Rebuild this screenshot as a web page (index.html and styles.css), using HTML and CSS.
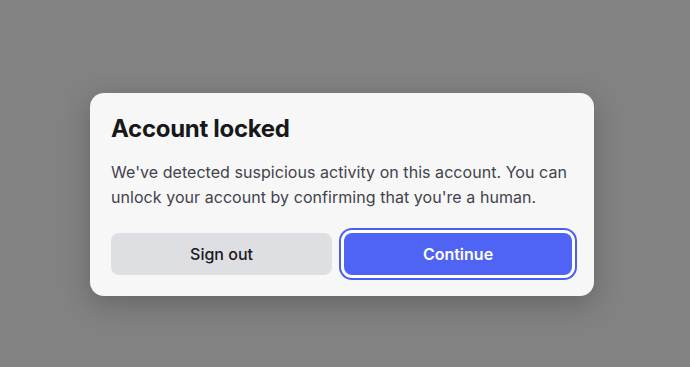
FILE: index.html
```html
<!DOCTYPE html>
<html lang="en">
<head>
    <meta charset="UTF-8">
    <meta name="viewport" content="width=device-width, initial-scale=1.0">
    <title>Account locked</title>
    <link rel="stylesheet" href="styles.css">
</head>
<body>
    <div class="overlay">
        <div class="dialog" role="dialog" aria-labelledby="dialogTitle">
            <h2 id="dialogTitle">Account locked</h2>
            <p>We've detected suspicious activity on this account. You can unlock your account by confirming that you're a human.</p>
            <div class="buttons">
                <button type="button" class="secondary">Sign out</button>
                <button type="button" class="primary">Continue</button>
            </div>
        </div>
    </div>
</body>
</html>
```

FILE: styles.css
```css
html, body {
    margin: 0;
    padding: 0;
    height: 100%;
}
body {
    font-family: Inter, "Noto Sans", sans-serif;
    background-color: #828283;
}
.overlay {
    padding: 93px 0 0 90px;
}
.dialog {
    box-sizing: border-box;
    width: 504px;
    padding: 21px 22px 21px 21px;
    background-color: #f7f7f7;
    border-radius: 14px;
    box-shadow: 0 8px 28px rgba(0, 0, 0, 0.22);
}
h2 {
    margin: 0 0 16px;
    font-size: 24px;
    line-height: 30px;
    font-weight: 700;
    letter-spacing: -0.3px;
    color: #18181b;
}
p {
    margin: 0;
    font-size: 16px;
    line-height: 25px;
    letter-spacing: 0.05px;
    color: #42424c;
}
.buttons {
    display: flex;
    gap: 12px;
    margin-top: 23px;
}
button {
    height: 42px;
    border: none;
    border-radius: 8px;
    font-family: inherit;
    font-size: 16px;
    font-weight: 500;
    cursor: pointer;
}
button.secondary {
    width: 221px;
    background-color: #dedfe3;
    color: #18181b;
}
button.primary {
    flex: 1;
    background-color: #4f64f5;
    color: #fff;
    font-weight: 600;
    box-shadow: 0 0 0 3px #fff, 0 0 0 5px #4a5ff0;
}
```
